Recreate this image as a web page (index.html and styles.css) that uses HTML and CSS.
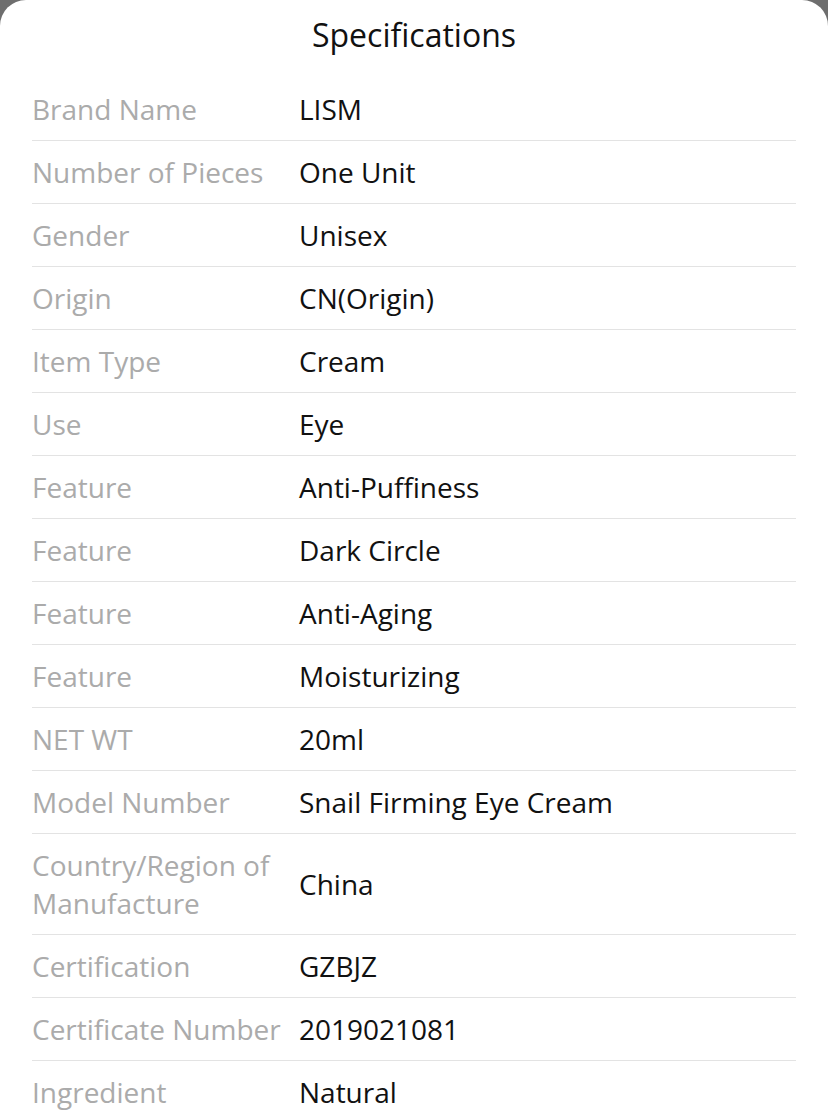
FILE: index.html
```html
<!DOCTYPE html>
<html>
<head>
<meta charset="utf-8">
<link rel="stylesheet" href="styles.css">
</head>
<body>
<div class="sheet">
  <h1 class="title">Specifications</h1>
  <div class="specs">
    <div class="row"><div class="label">Brand Name</div><div class="value">LISM</div></div>
    <div class="row"><div class="label">Number of Pieces</div><div class="value">One Unit</div></div>
    <div class="row"><div class="label">Gender</div><div class="value">Unisex</div></div>
    <div class="row"><div class="label">Origin</div><div class="value">CN(Origin)</div></div>
    <div class="row"><div class="label">Item Type</div><div class="value">Cream</div></div>
    <div class="row"><div class="label">Use</div><div class="value">Eye</div></div>
    <div class="row"><div class="label">Feature</div><div class="value">Anti-Puffiness</div></div>
    <div class="row"><div class="label">Feature</div><div class="value">Dark Circle</div></div>
    <div class="row"><div class="label">Feature</div><div class="value">Anti-Aging</div></div>
    <div class="row"><div class="label">Feature</div><div class="value">Moisturizing</div></div>
    <div class="row"><div class="label">NET WT</div><div class="value">20ml</div></div>
    <div class="row"><div class="label">Model Number</div><div class="value">Snail Firming Eye Cream</div></div>
    <div class="row"><div class="label">Country/Region of Manufacture</div><div class="value">China</div></div>
    <div class="row"><div class="label">Certification</div><div class="value">GZBJZ</div></div>
    <div class="row"><div class="label">Certificate Number</div><div class="value">2019021081</div></div>
    <div class="row"><div class="label">Ingredient</div><div class="value">Natural</div></div>
  </div>
</div>
</body>
</html>
```
FILE: styles.css
```css
html, body {
  margin: 0;
  padding: 0;
}
body {
  background: #6e6e6e;
  font-family: "Open Sans", "Noto Sans", sans-serif;
  height: 1117px;
  overflow: hidden;
}
.sheet {
  background: #fff;
  border-radius: 26px 26px 0 0;
  min-height: 1117px;
  padding: 0 32px;
  box-sizing: border-box;
}
.title {
  margin: 0;
  font-weight: 400;
  font-size: 32px;
  line-height: 36px;
  padding-top: 17px;
  padding-bottom: 25px;
  text-align: center;
  color: #111;
}
.row {
  display: grid;
  grid-template-columns: 267px 1fr;
  align-items: center;
  padding: 12px 0;
  border-bottom: 1px solid #e3e3e3;
  font-size: 28px;
  line-height: 38px;
}
.label {
  color: #ababab;
  padding-right: 8px;
}
.value {
  color: #111;
}
```
